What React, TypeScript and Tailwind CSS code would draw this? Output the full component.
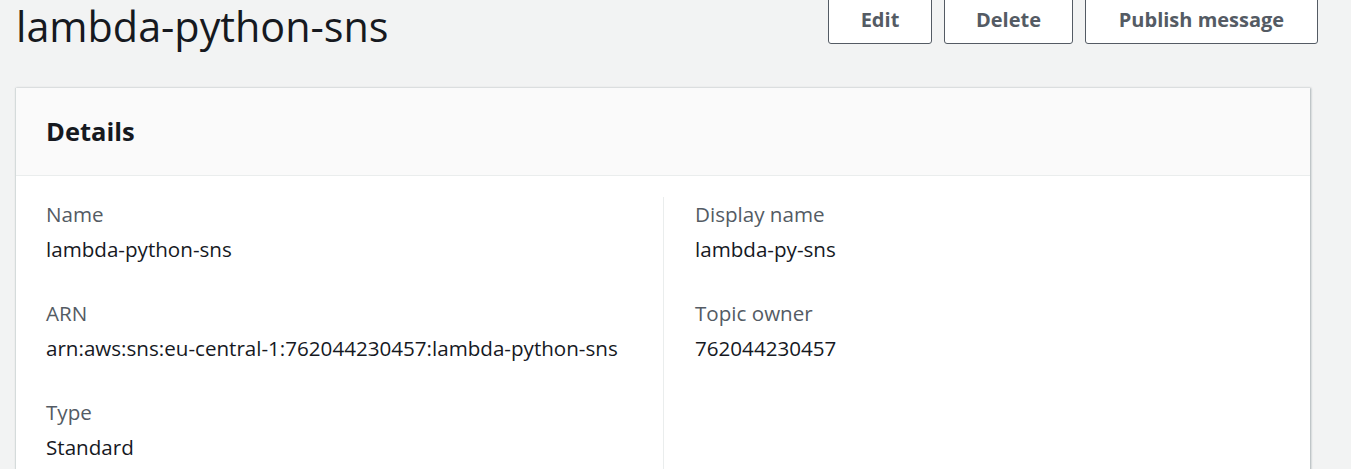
import React from "react";

const Field = ({ label, value }: { label: string; value: string }) => (
  <div className="flex flex-col">
    <div className="text-[20.6px] leading-[35px] text-[#545b64]">{label}</div>
    <div className="text-[20.6px] leading-[35px] text-[#16191f]">{value}</div>
  </div>
);

export default function App() {
  return (
    <div
      className="h-[469px] w-[1351px] overflow-hidden bg-[#f2f3f3]"
      style={{ fontFamily: '"Open Sans", "Noto Sans", sans-serif' }}
    >
      <div className="flex items-start justify-between pl-4 pr-[33px]">
        <h1 className="text-[41.3px] leading-[52px] text-[#16191f]">lambda-python-sns</h1>
        <div className="mt-[-4px] flex gap-3">
          <button className="h-12 w-[104px] rounded-[3px] border border-[#545b64] bg-white text-[20px] font-bold text-[#545b64]">
            Edit
          </button>
          <button className="h-12 w-[129px] rounded-[3px] border border-[#545b64] bg-white text-[20px] font-bold text-[#545b64]">
            Delete
          </button>
          <button className="h-12 w-[233px] rounded-[3px] border border-[#545b64] bg-white text-[20px] font-bold text-[#545b64]">
            Publish message
          </button>
        </div>
      </div>

      <div className="ml-[15px] mt-[36px] w-[1295px] border-l border-[#d5dbdb] bg-white shadow-[1px_0_2px_rgba(0,28,36,0.3)]">
        <div className="flex h-[88px] items-center border-b border-[#eaeded] bg-[#fafafa] pl-[30px]">
          <h2 className="text-[25.5px] font-bold text-[#16191f]">Details</h2>
        </div>
        <div className="flex pt-[21px]">
          <div className="flex w-[648px] flex-col gap-[29px] border-r border-[#eaeded] pb-6 pl-[30px]">
            <Field label="Name" value="lambda-python-sns" />
            <Field label="ARN" value="arn:aws:sns:eu-central-1:762044230457:lambda-python-sns" />
            <Field label="Type" value="Standard" />
          </div>
          <div className="flex flex-col gap-[29px] pl-[31px]">
            <Field label="Display name" value="lambda-py-sns" />
            <Field label="Topic owner" value="762044230457" />
          </div>
        </div>
      </div>
    </div>
  );
}
